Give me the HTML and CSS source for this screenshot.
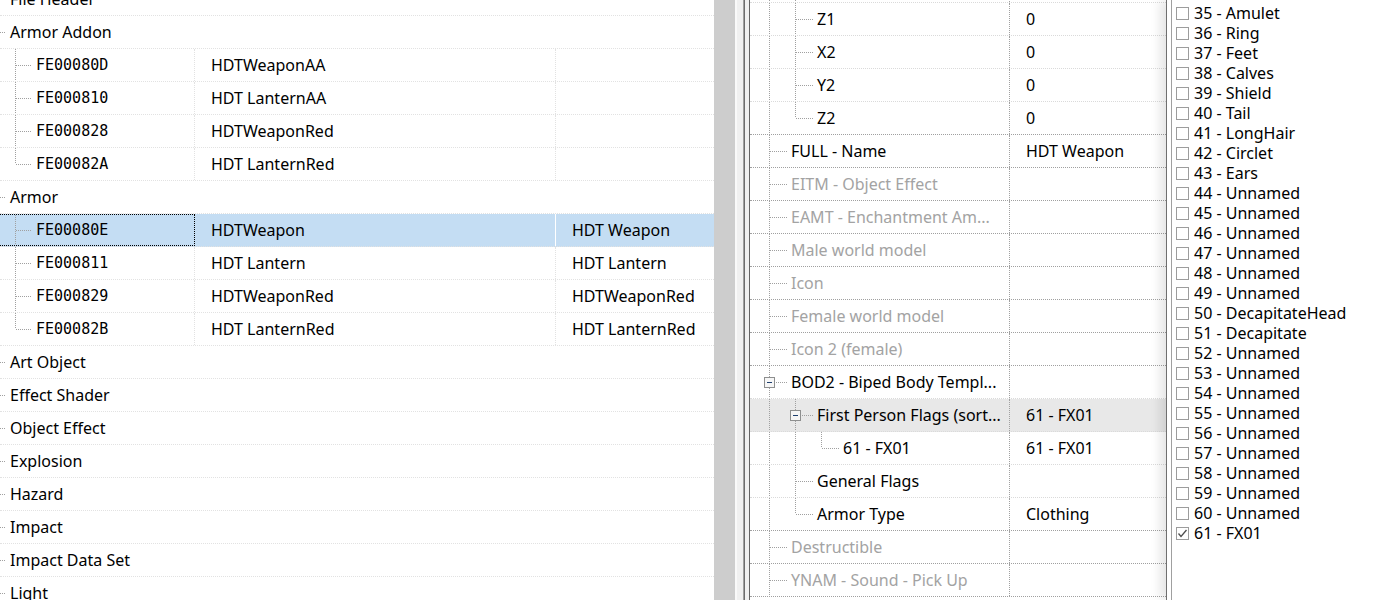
FILE: index.html
```html
<!DOCTYPE html>
<html lang="en">
<head>
  <meta charset="UTF-8" />
  <title>Record Editor</title>
  <link rel="stylesheet" href="styles.css">
</head>
<body>
  <div class="app">

    <!-- record tree: group / form id / editor id / name -->
    <section class="records">
      <div class="tree">
        <div class="row"><span class="gd tee"></span><span class="label">File Header</span></div>
        <div class="row"><span class="gd tee"></span><span class="label">Armor Addon</span></div>
        <div class="row kid">
          <div class="c1"><span class="gd pipe"></span><span class="gd tee"></span><span class="fid">FE00080D</span></div>
          <div class="c2">HDTWeaponAA</div><div class="c3"></div>
        </div>
        <div class="row kid">
          <div class="c1"><span class="gd pipe"></span><span class="gd tee"></span><span class="fid">FE000810</span></div>
          <div class="c2">HDT LanternAA</div><div class="c3"></div>
        </div>
        <div class="row kid">
          <div class="c1"><span class="gd pipe"></span><span class="gd tee"></span><span class="fid">FE000828</span></div>
          <div class="c2">HDTWeaponRed</div><div class="c3"></div>
        </div>
        <div class="row kid">
          <div class="c1"><span class="gd pipe"></span><span class="gd elbow"></span><span class="fid">FE00082A</span></div>
          <div class="c2">HDT LanternRed</div><div class="c3"></div>
        </div>
        <div class="row"><span class="gd tee"></span><span class="label">Armor</span></div>
        <div class="row kid sel">
          <div class="c1"><span class="gd pipe"></span><span class="gd tee"></span><span class="fid">FE00080E</span></div>
          <div class="c2">HDTWeapon</div><div class="c3">HDT Weapon</div>
        </div>
        <div class="row kid">
          <div class="c1"><span class="gd pipe"></span><span class="gd tee"></span><span class="fid">FE000811</span></div>
          <div class="c2">HDT Lantern</div><div class="c3">HDT Lantern</div>
        </div>
        <div class="row kid">
          <div class="c1"><span class="gd pipe"></span><span class="gd tee"></span><span class="fid">FE000829</span></div>
          <div class="c2">HDTWeaponRed</div><div class="c3">HDTWeaponRed</div>
        </div>
        <div class="row kid">
          <div class="c1"><span class="gd pipe"></span><span class="gd elbow"></span><span class="fid">FE00082B</span></div>
          <div class="c2">HDT LanternRed</div><div class="c3">HDT LanternRed</div>
        </div>
        <div class="row"><span class="gd tee"></span><span class="label">Art Object</span></div>
        <div class="row"><span class="gd tee"></span><span class="label">Effect Shader</span></div>
        <div class="row"><span class="gd tee"></span><span class="label">Object Effect</span></div>
        <div class="row"><span class="gd tee"></span><span class="label">Explosion</span></div>
        <div class="row"><span class="gd tee"></span><span class="label">Hazard</span></div>
        <div class="row"><span class="gd tee"></span><span class="label">Impact</span></div>
        <div class="row"><span class="gd tee"></span><span class="label">Impact Data Set</span></div>
        <div class="row"><span class="gd tee"></span><span class="label">Light</span></div>
      </div>
    </section>

    <div class="splitter"></div>

    <!-- element view of the selected record -->
    <section class="props">
      <div class="ptree">
        <div class="prow soft"><div class="pname"><span class="gd pipe"></span><span class="gd tee"></span>Y1</div><div class="pval">0</div></div>
        <div class="prow soft"><div class="pname"><span class="gd pipe"></span><span class="gd tee"></span>Z1</div><div class="pval">0</div></div>
        <div class="prow soft"><div class="pname"><span class="gd pipe"></span><span class="gd tee"></span>X2</div><div class="pval">0</div></div>
        <div class="prow soft"><div class="pname"><span class="gd pipe"></span><span class="gd tee"></span>Y2</div><div class="pval">0</div></div>
        <div class="prow"><div class="pname"><span class="gd pipe"></span><span class="gd elbow"></span>Z2</div><div class="pval">0</div></div>
        <div class="prow"><div class="pname"><span class="gd tee"></span>FULL - Name</div><div class="pval">HDT Weapon</div></div>
        <div class="prow off"><div class="pname"><span class="gd tee"></span>EITM - Object Effect</div><div class="pval"></div></div>
        <div class="prow off"><div class="pname"><span class="gd tee"></span>EAMT - Enchantment Am...</div><div class="pval"></div></div>
        <div class="prow off"><div class="pname"><span class="gd tee"></span>Male world model</div><div class="pval"></div></div>
        <div class="prow off"><div class="pname"><span class="gd tee"></span>Icon</div><div class="pval"></div></div>
        <div class="prow off"><div class="pname"><span class="gd tee"></span>Female world model</div><div class="pval"></div></div>
        <div class="prow off"><div class="pname"><span class="gd tee"></span>Icon 2 (female)</div><div class="pval"></div></div>
        <div class="prow soft"><div class="pname"><span class="gd tee"><i class="box"></i></span>BOD2 - Biped Body Templ...</div><div class="pval"></div></div>
        <div class="prow soft hot"><div class="pname"><span class="gd pipe"></span><span class="gd tee"><i class="box"></i></span>First Person Flags (sort...</div><div class="pval">61 - FX01</div></div>
        <div class="prow soft"><div class="pname"><span class="gd pipe"></span><span class="gd pipe"></span><span class="gd elbow"></span>61 - FX01</div><div class="pval">61 - FX01</div></div>
        <div class="prow soft"><div class="pname"><span class="gd pipe"></span><span class="gd tee"></span>General Flags</div><div class="pval"></div></div>
        <div class="prow"><div class="pname"><span class="gd pipe"></span><span class="gd elbow"></span>Armor Type</div><div class="pval">Clothing</div></div>
        <div class="prow off"><div class="pname"><span class="gd tee"></span>Destructible</div><div class="pval"></div></div>
        <div class="prow off"><div class="pname"><span class="gd tee"></span>YNAM - Sound - Pick Up</div><div class="pval"></div></div>
      </div>
    </section>

    <!-- flag picker dropdown -->
    <aside class="flags">
      <div class="flag"><span class="chk"></span>35 - Amulet</div>
      <div class="flag"><span class="chk"></span>36 - Ring</div>
      <div class="flag"><span class="chk"></span>37 - Feet</div>
      <div class="flag"><span class="chk"></span>38 - Calves</div>
      <div class="flag"><span class="chk"></span>39 - Shield</div>
      <div class="flag"><span class="chk"></span>40 - Tail</div>
      <div class="flag"><span class="chk"></span>41 - LongHair</div>
      <div class="flag"><span class="chk"></span>42 - Circlet</div>
      <div class="flag"><span class="chk"></span>43 - Ears</div>
      <div class="flag"><span class="chk"></span>44 - Unnamed</div>
      <div class="flag"><span class="chk"></span>45 - Unnamed</div>
      <div class="flag"><span class="chk"></span>46 - Unnamed</div>
      <div class="flag"><span class="chk"></span>47 - Unnamed</div>
      <div class="flag"><span class="chk"></span>48 - Unnamed</div>
      <div class="flag"><span class="chk"></span>49 - Unnamed</div>
      <div class="flag"><span class="chk"></span>50 - DecapitateHead</div>
      <div class="flag"><span class="chk"></span>51 - Decapitate</div>
      <div class="flag"><span class="chk"></span>52 - Unnamed</div>
      <div class="flag"><span class="chk"></span>53 - Unnamed</div>
      <div class="flag"><span class="chk"></span>54 - Unnamed</div>
      <div class="flag"><span class="chk"></span>55 - Unnamed</div>
      <div class="flag"><span class="chk"></span>56 - Unnamed</div>
      <div class="flag"><span class="chk"></span>57 - Unnamed</div>
      <div class="flag"><span class="chk"></span>58 - Unnamed</div>
      <div class="flag"><span class="chk"></span>59 - Unnamed</div>
      <div class="flag"><span class="chk"></span>60 - Unnamed</div>
      <div class="flag"><span class="chk on"><svg width="11" height="11" viewBox="0 0 11 11"><polyline points="1.5,5.5 4,8.5 9.5,2" fill="none" stroke="#4d4d4d" stroke-width="1.3"/></svg></span>61 - FX01</div>
    </aside>

  </div>
</body>
</html>
```

FILE: styles.css
```css
* {
  box-sizing: border-box;
}
html, body {
  margin: 0;
  height: 100%;
}
body {
  font-family: "Noto Sans", "Open Sans", sans-serif;
  font-size: 16px;
  color: #000;
  background: #fff;
  overflow: hidden;
}
.app {
  display: flex;
  height: 600px;
  overflow: hidden;
}

/* dotted tree guides */
:root {
  --vdots: repeating-linear-gradient(to bottom, #a0a0a0 0 1px, transparent 1px 2px);
  --hdots: repeating-linear-gradient(to right, #a0a0a0 0 1px, transparent 1px 2px);
}
.gd {
  flex: none;
  align-self: stretch;
  width: var(--step);
  background-repeat: no-repeat;
}
.gd.pipe {
  background-image: var(--vdots);
  background-size: 1px 100%;
}
.gd.tee,
.gd.elbow {
  display: flex;
  align-items: center;
  width: var(--last);
  background-image: var(--vdots), var(--hdots);
  background-size: 1px 100%, var(--stub) 1px;
  background-position: 0 0, 1px 50%;
}
.gd.elbow {
  background-size: 1px 50%, var(--stub) 1px;
}
.box {
  width: 11px;
  height: 11px;
  margin-left: -5px;
  border: 1px solid #8e8f8f;
  background: linear-gradient(#1e3f6e, #1e3f6e) center / 5px 1px no-repeat, #f6f6f6;
}

/* left: records */
.records {
  width: 714px;
  flex: none;
  overflow: hidden;
  --step: 26px;
  --last: 21px;
  --stub: 16px;
}
.tree {
  margin-top: -17px;
}
.row {
  display: flex;
  align-items: center;
  height: 33px;
  border-bottom: 1px dotted #e2e2e2;
  white-space: nowrap;
}
.row > .gd:first-child,
.c1 > .gd:first-child {
  margin-left: -11px;
}
.row.kid {
  align-items: stretch;
}
.c1, .c2, .c3 {
  display: flex;
  align-items: center;
}
.c1 {
  width: 195px;
  border-right: 1px dotted #e2e2e2;
}
.c2 {
  width: 361px;
  padding-left: 16px;
  border-right: 1px dotted #e2e2e2;
}
.c3 {
  flex: 1;
  padding-left: 16px;
}
.fid {
  font-family: "DejaVu Sans Mono", monospace;
  font-size: 15px;
}
.row.sel {
  background: #c4ddf3;
}
.sel .c1 {
  border: 1px dotted #000;
  border-left: 0;
}
.sel .c2 {
  border-right: 1px solid #fff;
}

/* splitter between the two views */
.splitter {
  width: 36px;
  flex: none;
  background: linear-gradient(to right,
    #cdcdcd 0 21px, #f9f9f9 21px 23px, #f0f0f0 23px 29px,
    #a0a0a0 29px 30px, #6d6d6d 30px 31px, #f0f0f0 31px 35px,
    #646464 35px 36px);
}

/* middle: record elements */
.props {
  width: 416px;
  flex: none;
  overflow: hidden;
  --step: 26px;
  --last: 22px;
  --stub: 17px;
}
.ptree {
  margin-top: -30px;
}
.prow {
  display: flex;
  height: 33px;
  border-bottom: 1px dotted #a0a0a0;
  white-space: nowrap;
}
.prow.soft {
  border-bottom-color: #dadada;
}
.prow.hot {
  background: #e8e8e8;
}
.prow.off {
  color: #a3a3a3;
}
.pname {
  display: flex;
  align-items: center;
  width: 260px;
  padding-left: 19px;
  border-right: 1px dotted #a0a0a0;
}
.pval {
  display: flex;
  align-items: center;
  flex: 1;
  padding-left: 16px;
}

/* right: flags dropdown */
.flags {
  position: relative;
  flex: 1;
  padding: 3px 0 0 9px;
  border-left: 1px solid #6f6f6f;
  box-shadow: -6px 0 10px rgba(0, 0, 0, 0.1), inset 4px 0 0 #fff, inset 5px 0 0 #a0a0a0;
  background: #fff;
}
.flag {
  display: flex;
  align-items: center;
  height: 20px;
  white-space: nowrap;
}
.chk {
  display: flex;
  align-items: center;
  justify-content: center;
  width: 13px;
  height: 13px;
  margin: 1px 5px 0 0;
  border: 1px solid #9c9c9c;
  background: #fff;
}
```
